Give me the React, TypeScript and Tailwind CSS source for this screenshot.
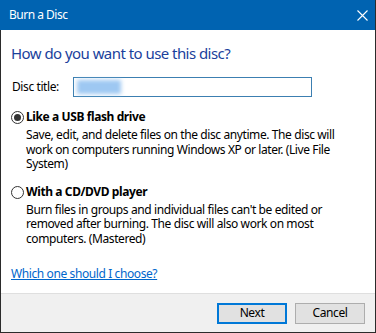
import React from "react";

const font = { fontFamily: '"Noto Sans", "Open Sans", Arial, sans-serif' };

function Radio({ checked }: { checked: boolean }) {
  return (
    <svg width="13" height="13" viewBox="0 0 13 13" className="shrink-0">
      <circle cx="6.5" cy="6.5" r="6" fill="white" stroke="#333333" strokeWidth="1" />
      {checked && <circle cx="6.5" cy="6.5" r="3.5" fill="#333333" />}
    </svg>
  );
}

export default function App() {
  return (
    <div className="w-[376px] h-[333px] bg-white flex flex-col text-[12px] text-black leading-[14.5px] tracking-[-0.4px]" style={font}>
      <div className="h-[30px] shrink-0 bg-[#0063b1] flex items-center justify-between pl-[9px] pr-[5px] text-white border-r border-[#2b2b2b]">
        <span className="text-[12px] tracking-[-0.5px]">Burn a Disc</span>
        <svg width="11" height="11" viewBox="0 0 11 11" className="mr-[2px]">
          <path d="M0.5 0.5 L10.5 10.5 M10.5 0.5 L0.5 10.5" stroke="white" strokeWidth="1.1" />
        </svg>
      </div>
      <div className="flex-1 flex flex-col border-l border-r border-b border-[#2b2b2b]">
        <div className="flex-1 flex flex-col px-[10px]">
          <div className="mt-[13px] text-[15px] leading-[20px] tracking-[-0.55px] text-[#1a3f9c]">How do you want to use this disc?</div>
          <div className="mt-[14px] flex items-center h-[20px]">
            <span className="w-[62px] pl-[1px]">Disc title:</span>
            <div className="relative w-[239px] h-[20px] border border-[#3c7fb1] bg-white">
              <div className="absolute left-[3px] top-[2px] w-[44px] h-[14px] bg-[#9ec8f2] blur-[2px]" />
            </div>
          </div>
          <div className="mt-[13px] flex items-center gap-[2px] h-[15px]">
            <Radio checked />
            <span className="font-bold">Like a USB flash drive</span>
          </div>
          <div className="ml-[15px] mt-[3px] w-[322px]">
            Save, edit, and delete files on the disc anytime. The disc will work on computers running Windows XP or later. (Live File System)
          </div>
          <div className="mt-[13px] flex items-center gap-[2px] h-[15px]">
            <Radio checked={false} />
            <span className="font-bold">With a CD/DVD player</span>
          </div>
          <div className="ml-[15px] mt-[3px] w-[322px]">
            Burn files in groups and individual files can't be edited or removed after burning. The disc will also work on most computers. (Mastered)
          </div>
          <div className="mt-[21px]">
            <a className="text-[#0066cc] underline">Which one should I choose?</a>
          </div>
        </div>
        <div className="h-[39px] shrink-0 bg-[#f0f0f0] border-t border-[#dfdfdf] flex items-center justify-end gap-[8px] pr-[10px]">
          <button className="w-[70px] h-[21px] border-2 border-[#0078d7] bg-[#e1e1e1] text-[12px] leading-none">Next</button>
          <button className="w-[70px] h-[21px] border border-[#adadad] bg-[#e1e1e1] text-[12px] leading-none">Cancel</button>
        </div>
      </div>
    </div>
  );
}
